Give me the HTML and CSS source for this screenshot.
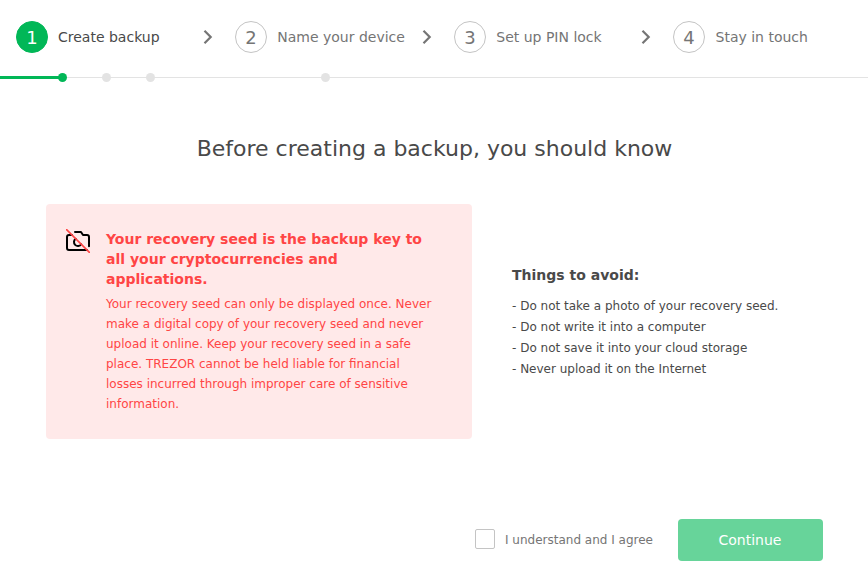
FILE: index.html
```html
<!DOCTYPE html>
<html lang="en">
<head>
<meta charset="utf-8">
<title>Create backup</title>
<link rel="stylesheet" href="styles.css">
</head>
<body>
<nav class="steps">
  <div class="step active"><span class="num">1</span><span class="label">Create backup</span><svg class="chevron" width="10" height="16" viewBox="0 0 10 16"><path d="M1.5 1.8 7.7 8l-6.2 6.2"/></svg></div>
  <div class="step"><span class="num">2</span><span class="label">Name your device</span><svg class="chevron" width="10" height="16" viewBox="0 0 10 16"><path d="M1.5 1.8 7.7 8l-6.2 6.2"/></svg></div>
  <div class="step"><span class="num">3</span><span class="label">Set up PIN lock</span><svg class="chevron" width="10" height="16" viewBox="0 0 10 16"><path d="M1.5 1.8 7.7 8l-6.2 6.2"/></svg></div>
  <div class="step last"><span class="num">4</span><span class="label">Stay in touch</span></div>
</nav>
<div class="progress">
  <div class="fill"></div>
  <i class="dot done"></i><i class="dot second"></i><i class="dot third"></i><i class="dot fourth"></i>
</div>
<main>
  <h1>Before creating a backup, you should know</h1>
  <div class="content">
    <section class="warning">
      <svg class="camera" width="24" height="24" viewBox="0 0 24 24">
        <path class="body" d="M21 21H3a2 2 0 0 1-2-2V8a2 2 0 0 1 2-2h3m3-3h6l2 3h4a2 2 0 0 1 2 2v9.34m-7.72-2.06a4 4 0 1 1-5.56-5.56"/>
        <path class="slash" d="M.6.6l22.8 22.8"/>
      </svg>
      <div class="text">
        <h2>Your recovery seed is the backup key to all your cryptocurrencies and applications.</h2>
        <p>Your recovery seed can only be displayed once. Never make a digital copy of your recovery seed and never upload it online. Keep your recovery seed in a safe place. TREZOR cannot be held liable for financial losses incurred through improper care of sensitive information.</p>
      </div>
    </section>
    <section class="avoid">
      <h2>Things to avoid:</h2>
      <p>- Do not take a photo of your recovery seed.</p>
      <p>- Do not write it into a computer</p>
      <p>- Do not save it into your cloud storage</p>
      <p>- Never upload it on the Internet</p>
    </section>
  </div>
  <footer>
    <label class="agree"><span class="box"></span>I understand and I agree</label>
    <button class="continue">Continue</button>
  </footer>
</main>
</body>
</html>
```
FILE: styles.css
```css
* { box-sizing: border-box; }
body { margin: 0; height: 576px; overflow: hidden; background: #fff; color: #494949; font-family: "DejaVu Sans", sans-serif; font-size: 12px; }
h1, h2, p { margin: 0; }
.steps { display: flex; height: 77px; padding: 21px 0 0 16px; }
.step { display: flex; align-items: center; width: 219px; height: 32px; color: #757575; font-size: 14px; }
.num { display: flex; align-items: center; justify-content: center; width: 32px; height: 32px; margin-right: 10.25px; border: 1px solid #c4c4c4; border-radius: 50%; font-size: 18px; }
.active { color: #494949; }
.active .num { margin-right: 10px; background: #01b757; border-color: #01b757; color: #fff; }
.chevron { margin: 0 22px 0 auto; fill: none; stroke: #757575; stroke-width: 2.2; }
.last { width: 176px; }
.last .num { margin-right: 10.5px; }
.progress { position: relative; height: 1px; background: #e3e3e3; }
.fill { position: absolute; left: 0; top: -1px; width: 62px; height: 3px; background: #01b757; }
.dot { position: absolute; top: -4px; width: 9px; height: 9px; border-radius: 50%; background: #e3e3e3; }
.done { left: 58px; background: #01b757; }
.second { left: 102px; }
.third { left: 146px; }
.fourth { left: 321px; }
h1 { padding: 54px 0 0 1px; line-height: 33px; text-align: center; font-size: 22px; font-weight: 400; }
.content { display: flex; align-items: center; margin: 39px 46px 0; }
.warning { display: flex; width: 426px; height: 235px; padding: 25px 36px 0 20px; border-radius: 4px; background: #ffe9e9; color: #ff4545; }
.camera { flex: none; margin-right: 16px; fill: none; stroke-width: 2; stroke-linecap: round; stroke-linejoin: round; }
.body { stroke: #000; }
.slash { stroke: #ff4545; stroke-width: 1.6; }
h2 { font-size: 14px; line-height: 20px; font-weight: 700; }
.warning p { margin-top: 5px; line-height: 20px; }
.avoid { margin-left: 40px; padding-top: 1px; }
.avoid h2 { margin-bottom: 11px; }
.avoid p { line-height: 21px; }
footer { display: flex; justify-content: flex-end; align-items: center; margin: 80px 45px 0 0; }
.agree { display: flex; align-items: center; margin-right: 25px; color: #757575; }
.box { width: 20px; height: 20px; margin: 0 10px 2px 0; border: 1px solid #c4c4c4; border-radius: 2px; }
.continue { width: 145px; height: 42px; padding: 0 1px 0 0; border: 0; border-radius: 4px; background: #67d49a; color: #fff; font: 14px "DejaVu Sans", sans-serif; }
```
